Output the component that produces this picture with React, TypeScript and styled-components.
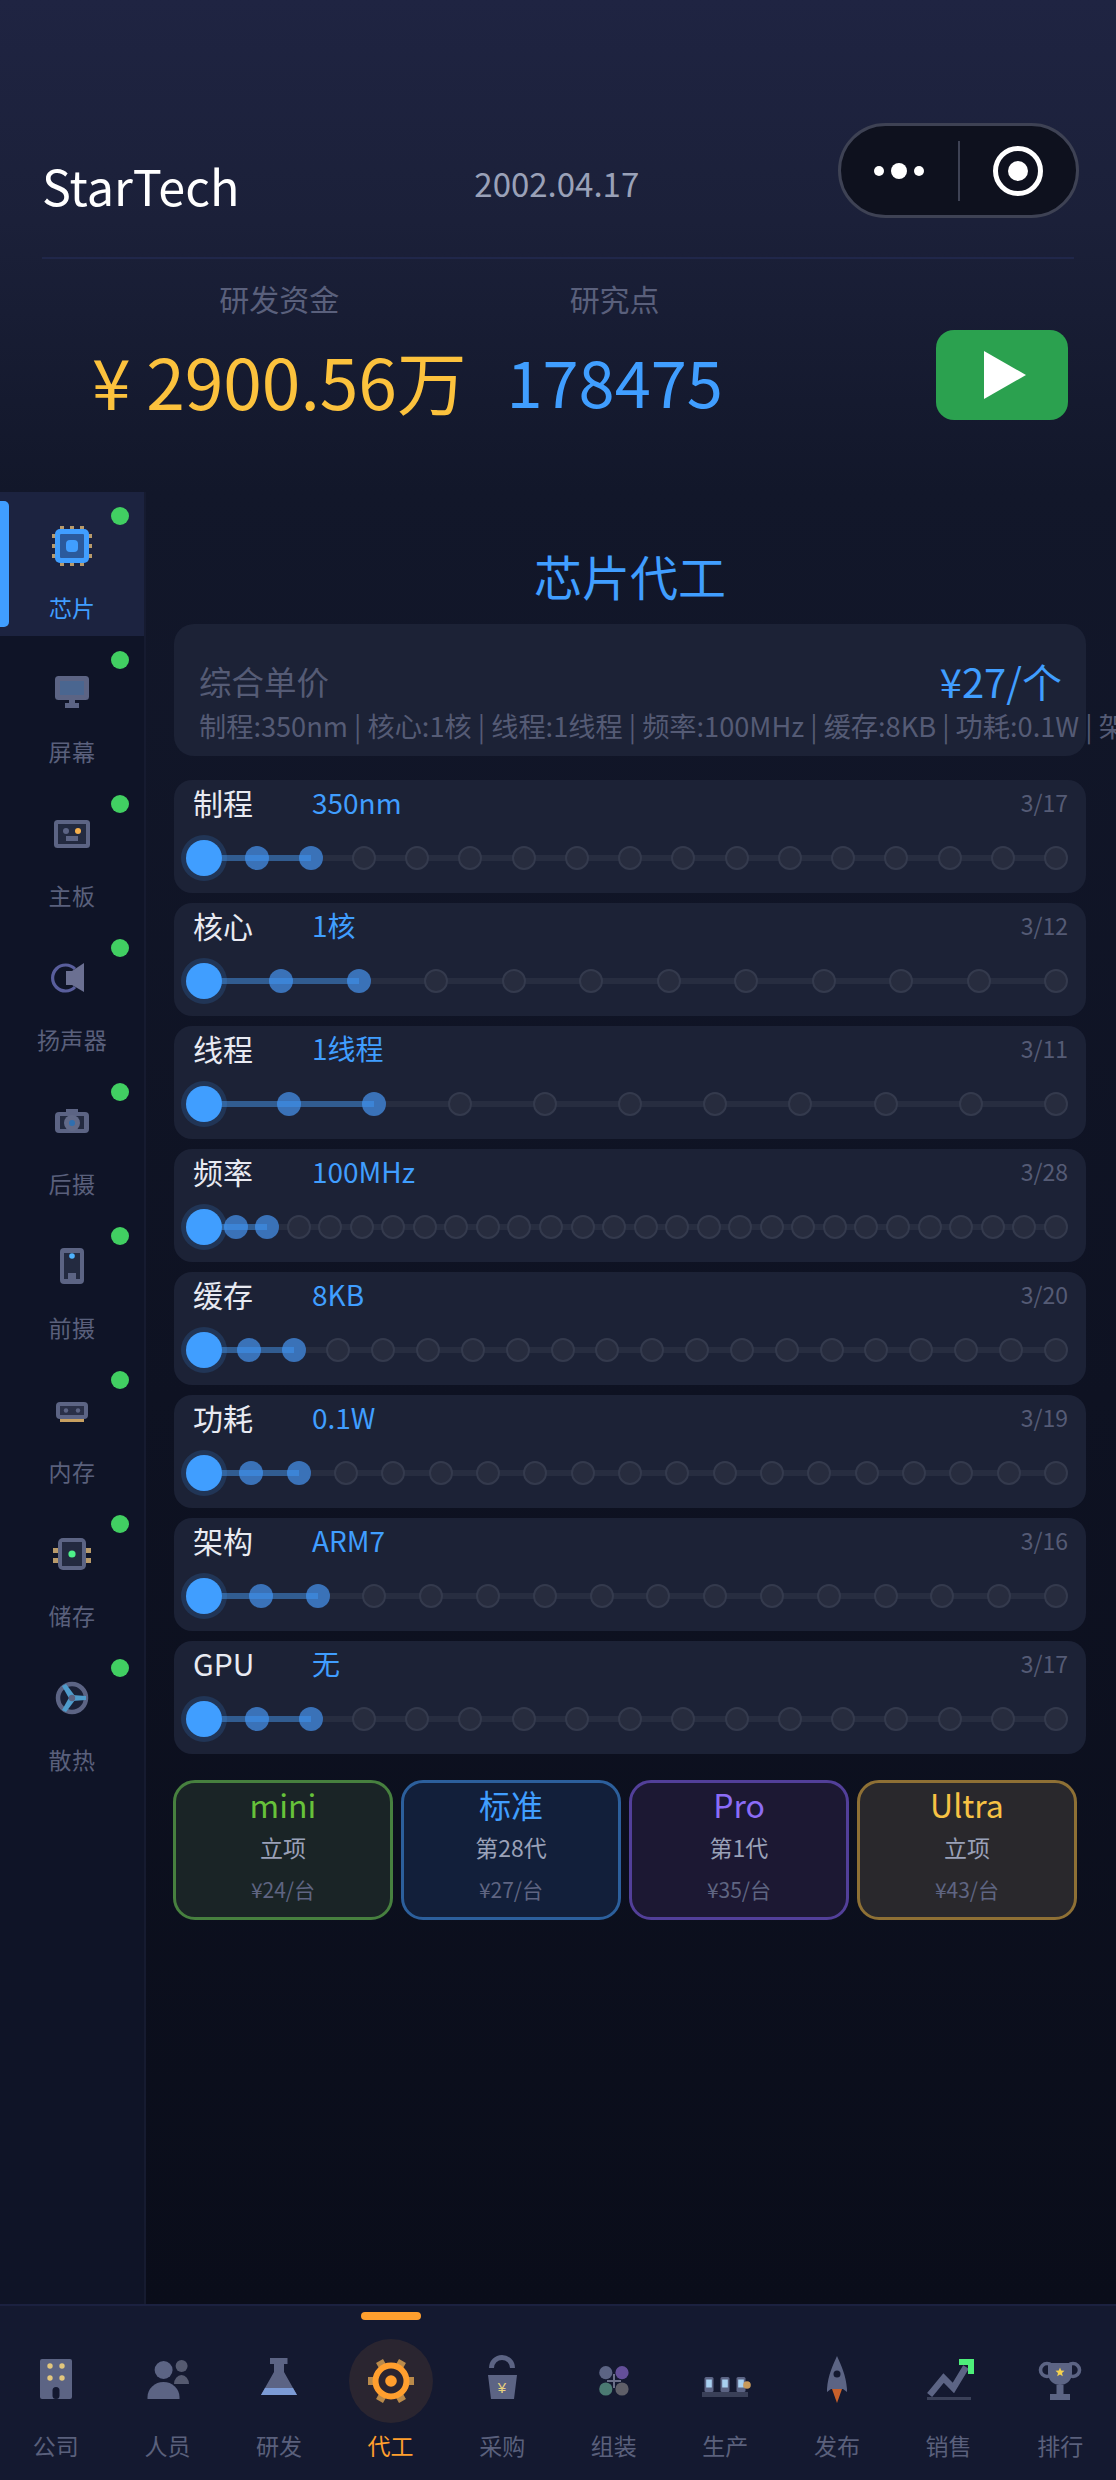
import React from "react";
import styled, { createGlobalStyle } from "styled-components";

const G = "#5c6484";
const D = "#232a40";
const T = "#b89a6a";

const Global = createGlobalStyle`
  html, body { margin: 0; padding: 0; background: #0b0e1b; }
  * { box-sizing: border-box; }
  #root { width: 1116px; height: 2480px; overflow: hidden; }
`;

const Page = styled.div`
  width: 1116px;
  height: 2480px;
  display: flex;
  flex-direction: column;
  overflow: hidden;
  font-family: "Noto Sans CJK SC", "Noto Sans", sans-serif;
  font-weight: 400;
`;

const Header = styled.header`
  height: 492px;
  flex: none;
  padding-top: 123px;
  background: linear-gradient(180deg, #1f2442 0%, #1b2039 45%, #12172a 100%);
`;
const TopRow = styled.div`
  display: flex;
  align-items: flex-start;
  padding: 0 37px 0 42px;
`;
const Brand = styled.div`
  margin-top: 30px;
  font-size: 48.5px;
  line-height: 64px;
  color: #fff;
`;
const DateText = styled.div`
  margin: 40px 0 0 235px;
  font-size: 33px;
  line-height: 40px;
  color: #9aa1b8;
`;
const Capsule = styled.div`
  margin-left: auto;
  width: 241px;
  height: 95px;
  border: 3px solid #3e4254;
  border-radius: 48px;
  background: #0e111e;
  display: flex;
  align-items: center;
`;
const CapsuleSide = styled.div`
  flex: 1;
  display: flex;
  justify-content: center;
`;
const CapsuleLine = styled.div`
  width: 2px;
  height: 60px;
  background: #3e4254;
`;
const HeaderRule = styled.div`
  height: 2px;
  margin: 39px 42px 0;
  background: #20274a;
`;
const Stats = styled.div`
  display: flex;
  align-items: flex-start;
  padding: 19px 48px 0 92px;
`;
const Stat = styled.div`
  display: flex;
  flex-direction: column;
  align-items: center;
  margin-right: 40px;
`;
const StatLabel = styled.div`
  font-size: 30px;
  line-height: 40px;
  color: #5a607c;
`;
const StatValue = styled.div<{ $color: string; $size: number }>`
  margin-top: 22px;
  font-size: ${(p) => p.$size}px;
  line-height: 80px;
  white-space: nowrap;
  color: ${(p) => p.$color};
`;
const PlayButton = styled.div`
  margin: 52px 0 0 auto;
  width: 132px;
  height: 90px;
  border-radius: 18px;
  background: #2ba14f;
  display: flex;
  align-items: center;
  justify-content: center;
  padding-left: 5px;
`;

const Body = styled.div`
  flex: 1;
  display: flex;
  min-height: 0;
`;
const Sidebar = styled.aside`
  width: 146px;
  flex: none;
  background: #0f1427;
  border-right: 2px solid #161b30;
`;
const SideItem = styled.div<{ $active?: boolean }>`
  position: relative;
  height: 144px;
  padding-top: 30px;
  display: flex;
  flex-direction: column;
  align-items: center;
  background: ${(p) => (p.$active ? "#1c2340" : "transparent")};
`;
const SideMark = styled.div`
  position: absolute;
  left: 0;
  top: 9px;
  width: 9px;
  height: 126px;
  border-radius: 0 5px 5px 0;
  background: #409eff;
`;
const SideDot = styled.div`
  position: absolute;
  left: 111px;
  top: 15px;
  width: 18px;
  height: 18px;
  border-radius: 50%;
  background: #41cf62;
`;
const SideLabel = styled.div<{ $active?: boolean }>`
  margin-top: 21px;
  font-size: 23px;
  line-height: 32px;
  letter-spacing: ${(p) => (p.$active ? "0" : "0.4px")};
  color: ${(p) => (p.$active ? "#409eff" : "#5a607c")};
`;
const IconBox = styled.svg`
  display: block;
  flex: none;
  width: 48px;
  height: 48px;
  overflow: visible;
`;

const Main = styled.main`
  flex: 1;
  min-width: 0;
  padding: 53px 30px 0 28px;
  background: linear-gradient(180deg, #12172a 0%, #0a0d1a 100%);
`;
const Title = styled.h1`
  margin: 0;
  text-align: center;
  font-size: 48px;
  font-weight: 400;
  line-height: 60px;
  color: #409eff;
`;
const Summary = styled.section`
  margin-top: 19px;
  height: 132px;
  padding: 35px 24px 0 25px;
  border-radius: 20px;
  background: #1c2236;
`;
const SummaryTop = styled.div`
  display: flex;
  justify-content: space-between;
  align-items: center;
  height: 44px;
`;
const SummaryName = styled.div`
  font-size: 32.5px;
  line-height: 44px;
  color: #555b75;
`;
const SummaryPrice = styled.div`
  font-size: 40px;
  line-height: 44px;
  color: #409eff;
`;
const SummaryDetail = styled.div`
  margin-top: 4px;
  font-size: 27.2px;
  line-height: 36px;
  white-space: nowrap;
  color: #555b75;
`;
const Rows = styled.div`
  margin-top: 24px;
  display: flex;
  flex-direction: column;
  gap: 10px;
`;
const Row = styled.section`
  height: 113px;
  padding: 5px 18px 0;
  border-radius: 18px;
  background: #1c2236;
`;
const RowHead = styled.div`
  display: flex;
  align-items: center;
  height: 34px;
`;
const RowName = styled.div`
  width: 120px;
  padding-left: 1px;
  font-size: 30px;
  line-height: 34px;
  color: #e8eaf2;
`;
const RowValue = styled.div`
  font-size: 28px;
  line-height: 34px;
  color: #409eff;
`;
const RowCount = styled.div`
  margin-left: auto;
  font-size: 23px;
  line-height: 34px;
  color: #555b75;
`;
const Track = styled.div`
  position: relative;
  margin-top: 15px;
  height: 48px;
  display: flex;
  align-items: center;
  justify-content: space-between;
`;
const TrackBase = styled.div`
  position: absolute;
  left: 12px;
  right: 12px;
  top: 21px;
  height: 6px;
  background: #272d40;
`;
const TrackFillArea = styled.div`
  position: absolute;
  left: 12px;
  right: 12px;
  top: 21px;
  height: 6px;
  z-index: 2;
`;
const TrackFill = styled.div`
  height: 100%;
  background: rgba(64, 158, 255, 0.42);
`;
const Stop = styled.div<{ $state: "current" | "done" | "todo" }>`
  position: relative;
  z-index: 1;
  flex: none;
  width: 24px;
  height: 24px;
  border-radius: 50%;
  ${(p) =>
    p.$state === "current"
      ? `
    width: 36px; height: 36px; margin: 0 -6px; background: #409eff;
    box-shadow: 0 0 0 5px rgba(64,158,255,.16); z-index: 3;`
      : p.$state === "done"
      ? `background: #3a72b8;`
      : `background: #272c3e; border: 2px solid #343a4d;`}
`;
const Tiers = styled.div`
  margin: 26px 0 0 -1px;
  display: flex;
  gap: 8px;
`;
const Tier = styled.div<{ $border: string; $bg: string }>`
  width: 220px;
  height: 140px;
  flex: none;
  border: 3px solid ${(p) => p.$border};
  border-radius: 22px;
  background: ${(p) => p.$bg};
  display: flex;
  flex-direction: column;
  align-items: center;
  padding-top: 1px;
`;
const TierName = styled.div<{ $color: string }>`
  font-size: 32px;
  line-height: 40px;
  color: ${(p) => p.$color};
`;
const TierStatus = styled.div`
  margin-top: 7px;
  font-size: 23px;
  line-height: 32px;
  color: #9aa1b8;
`;
const TierPrice = styled.div`
  margin-top: 12px;
  font-size: 21px;
  line-height: 28px;
  color: #5f6582;
`;

const Nav = styled.nav`
  height: 176px;
  flex: none;
  display: flex;
  border-top: 2px solid #1b2140;
  background: #141930;
`;
const NavItem = styled.div`
  position: relative;
  flex: 1;
  display: flex;
  flex-direction: column;
  align-items: center;
  padding-top: 51px;
`;
const NavGlow = styled.div`
  position: absolute;
  top: 33px;
  left: 50%;
  width: 84px;
  height: 84px;
  margin-left: -42px;
  border-radius: 50%;
  background: #2a2530;
`;
const NavBar = styled.div`
  position: absolute;
  top: 6px;
  left: 50%;
  width: 60px;
  height: 8px;
  margin-left: -30px;
  border-radius: 4px;
  background: #ff9f2e;
`;
const NavIcon = styled.div`
  position: relative;
  height: 48px;
`;
const NavLabel = styled.div<{ $active?: boolean }>`
  position: relative;
  margin-top: 24px;
  font-size: 23px;
  line-height: 32px;
  color: ${(p) => (p.$active ? "#ff9f2e" : "#5a607c")};
`;

const Svg = ({ children }: { children: React.ReactNode }) => (
  <IconBox viewBox="0 0 48 48">{children}</IconBox>
);

const pins = [12, 22, 32];
const sideIcons: Record<string, React.ReactNode> = {
  芯片: (
    <Svg>
      {pins.map((p) => (
        <g key={p} fill={T}>
          <rect x={p} y={4} width={4} height={4} />
          <rect x={p} y={40} width={4} height={4} />
          <rect x={4} y={p} width={4} height={4} />
          <rect x={40} y={p} width={4} height={4} />
        </g>
      ))}
      <rect x={7} y={7} width={34} height={34} rx={5} fill="#409eff" />
      <rect x={12} y={12} width={24} height={24} rx={1} fill="#2b5a9c" />
      <rect x={18} y={18} width={12} height={12} rx={4} fill="#409eff" />
    </Svg>
  ),
  屏幕: (
    <Svg>
      <rect x={7} y={10} width={34} height={24} rx={3.5} fill={G} />
      <rect x={12} y={15} width={24} height={14} fill="#4a6690" />
      <rect x={21} y={34} width={6} height={4} fill={G} />
      <rect x={17} y={37} width={14} height={5} fill={G} />
    </Svg>
  ),
  主板: (
    <Svg>
      <rect x={6} y={10} width={36} height={28} rx={3.5} fill={G} />
      <rect x={10} y={14} width={28} height={20} fill={D} />
      <circle cx={18} cy={21} r={3} fill={G} />
      <circle cx={30} cy={21} r={3} fill="#f5b04d" />
      <rect x={18} y={26} width={12} height={5} fill={G} />
    </Svg>
  ),
  扬声器: (
    <Svg>
      <path d="M27 15 A13 13 0 1 0 27 33" fill="none" stroke="#595e9c" strokeWidth={3.2} />
      <polygon points="18,17 24,17 36,9 36,38 24,31 18,31" fill="#6b7092" />
    </Svg>
  ),
  后摄: (
    <Svg>
      <rect x={18} y={11} width={12} height={5} fill={G} />
      <rect x={7} y={14} width={34} height={21} rx={4} fill={G} />
      <rect x={12} y={18} width={24} height={13} fill={D} />
      <circle cx={24} cy={25} r={8} fill="#626a88" />
      <circle cx={24} cy={25} r={3} fill="#2f6fb0" />
    </Svg>
  ),
  前摄: (
    <Svg>
      <rect x={12} y={6} width={24} height={36} rx={4} fill={G} />
      <rect x={16} y={11} width={16} height={26} fill={D} />
      <circle cx={24} cy={14} r={2.8} fill="#4fb3ff" />
      <rect x={20} y={31} width={8} height={6} fill={G} />
    </Svg>
  ),
  内存: (
    <Svg>
      <rect x={8} y={16} width={32} height={17} rx={4} fill={G} />
      <rect x={12} y={20} width={24} height={9} fill="#2a3048" />
      <circle cx={18} cy={24.5} r={2.2} fill={G} />
      <circle cx={30} cy={24.5} r={2.2} fill={G} />
      <rect x={12} y={33} width={24} height={3} fill="#c8a060" />
    </Svg>
  ),
  储存: (
    <Svg>
      <rect x={5} y={18} width={6} height={5} fill={T} />
      <rect x={5} y={28} width={6} height={5} fill={T} />
      <rect x={37} y={18} width={6} height={5} fill={T} />
      <rect x={37} y={28} width={6} height={5} fill={T} />
      <rect x={10} y={8} width={28} height={32} rx={5} fill={G} />
      <rect x={14} y={12} width={20} height={24} fill={D} />
      <circle cx={24} cy={24} r={3.6} fill="#4ef08a" />
    </Svg>
  ),
  散热: (
    <Svg>
      <circle cx={24} cy={24} r={14} fill="#1a2036" stroke={G} strokeWidth={4.5} />
      <g fill="#4f9ccc">
        <polygon points="24,21 38,22 38,26 24,27" />
        <polygon points="22,26 14,12 18,10 27,22" />
        <polygon points="22,22 14,36 18,38 27,26" />
      </g>
      <circle cx={24} cy={24} r={3.2} fill={G} />
    </Svg>
  ),
};

const navIcons: Record<string, React.ReactNode> = {
  公司: (
    <Svg>
      <rect x={8} y={2} width={32} height={40} rx={2} fill={G} />
      <g fill="#e3c77d">
        <circle cx={18} cy={9} r={2.7} />
        <circle cx={30} cy={9} r={2.7} />
        <circle cx={18} cy={21} r={2.7} />
        <circle cx={30} cy={21} r={2.7} />
      </g>
      <rect x={20.5} y={30} width={7} height={12} rx={3.5} fill="#141930" />
    </Svg>
  ),
  人员: (
    <Svg>
      <circle cx={38.6} cy={9} r={6} fill="#555a70" />
      <path d="M31 27 A7.5 9 0 0 1 46 27 Z" fill="#555a70" />
      <circle cx={20.6} cy={13} r={9} fill={G} />
      <path d="M4.5 42 V40 A16 15 0 0 1 36.5 40 V42 Z" fill={G} />
    </Svg>
  ),
  研发: (
    <Svg>
      <rect x={15} y={1} width={17.5} height={6} fill={G} />
      <polygon points="19,7 29,7 29,15 42,38 6,38 19,15" fill={G} />
      <polygon points="10,31 38,31 42,38 6,38" fill="#7c9bd6" />
    </Svg>
  ),
  代工: (
    <Svg>
      {[0, 60, 120, 180, 240, 300].map((a) => (
        <rect key={a} x={20} y={1} width={8} height={8} fill="#b98a4a" transform={`rotate(${a + 30} 24 24)`} />
      ))}
      <circle cx={24} cy={24} r={15.5} fill="#2a2530" stroke="#ff9f2e" strokeWidth={6} />
      <circle cx={24} cy={24} r={5.8} fill="#ff9f2e" />
    </Svg>
  ),
  采购: (
    <Svg>
      <path d="M13.5 11 A10.5 10.5 0 0 1 34.5 11" fill="none" stroke={G} strokeWidth={5} />
      <polygon points="10,18 39,18 36,42 13,42" fill={G} />
      <text x={24} y={36} textAnchor="middle" fontSize={15} fill="#e9d27d" fontFamily="Liberation Sans, sans-serif">
        ¥
      </text>
    </Svg>
  ),
  组装: (
    <Svg>
      <circle cx={15.8} cy={15.7} r={6.6} fill={G} />
      <circle cx={32} cy={15.7} r={6.6} fill="#644f99" />
      <circle cx={15.8} cy={32} r={6.6} fill="#4b7a72" />
      <circle cx={32} cy={32} r={6.6} fill="#5f5f68" />
      <rect x={17} y={23} width={14} height={2} fill="#6a6f88" />
      <rect x={23} y={17} width={2} height={14} fill="#6a6f88" />
    </Svg>
  ),
  生产: (
    <Svg>
      <rect x={1} y={35} width={46} height={5} fill="#3a4058" />
      {[3.5, 19.5, 35.5].map((x) => (
        <g key={x}>
          <rect x={x} y={20} width={9} height={15} rx={1.5} fill={G} />
          <rect x={x + 1.7} y={22.5} width={5.6} height={8} fill="#a8d0f0" />
        </g>
      ))}
      <circle cx={46} cy={28} r={3.8} fill="#c89a5a" />
    </Svg>
  ),
  发布: (
    <Svg>
      <polygon points="19,32 29,32 24,46" fill="#c8602a" />
      <path d="M24 -1 C28 8 33 18 34 32 V35 L30 32 H18 L14 35 V32 C15 18 20 8 24 -1 Z" fill={G} />
      <circle cx={24} cy={17} r={3.5} fill="#141930" />
    </Svg>
  ),
  销售: (
    <Svg>
      <rect x={2} y={40} width={44} height={3} fill="#3a4058" />
      <polyline points="4.6,38 18.6,21 28.4,31 41,10" fill="none" stroke={G} strokeWidth={6.5} />
      <polygon points="34,2 49,2 49,17 43,17 43,8 34,8" fill="#4ef07a" />
    </Svg>
  ),
  排行: (
    <Svg>
      <circle cx={11} cy={13} r={6.5} fill="none" stroke={G} strokeWidth={3.6} />
      <circle cx={37} cy={13} r={6.5} fill="none" stroke={G} strokeWidth={3.6} />
      <path d="M12 6 H36 V16 C36 24 30 28 24 28 C18 28 12 24 12 16 Z" fill={G} />
      <rect x={20.5} y={28} width={7} height={10} fill={G} />
      <rect x={14} y={37} width={20} height={6} fill={G} />
      <polygon
        points="24,10.5 25.2,13.6 28.5,13.8 26,15.9 26.8,19.2 24,17.4 21.2,19.2 22,15.9 19.5,13.8 22.8,13.6"
        fill="#f7d34f"
      />
    </Svg>
  ),
};

const specs = [
  ["制程", "350nm", 17],
  ["核心", "1核", 12],
  ["线程", "1线程", 11],
  ["频率", "100MHz", 28],
  ["缓存", "8KB", 20],
  ["功耗", "0.1W", 19],
  ["架构", "ARM7", 16],
  ["GPU", "无", 17],
] as const;

const tiers = [
  { name: "mini", status: "立项", price: "¥24/台", color: "#67c23a", border: "#47803f", bg: "#1a2426" },
  { name: "标准", status: "第28代", price: "¥27/台", color: "#409eff", border: "#2c5f9c", bg: "#121f3a" },
  { name: "Pro", status: "第1代", price: "¥35/台", color: "#8b6cf6", border: "#523f99", bg: "#1c1833" },
  { name: "Ultra", status: "立项", price: "¥43/台", color: "#f7c244", border: "#8e7035", bg: "#29282c" },
];

export default function App() {
  return (
    <Page>
      <Global />
      <Header>
        <TopRow>
          <Brand>StarTech</Brand>
          <DateText>2002.04.17</DateText>
          <Capsule>
            <CapsuleSide>
              <svg width="56" height="20" viewBox="0 0 56 20">
                <circle cx="8" cy="10" r="5" fill="#fff" />
                <circle cx="28" cy="10" r="8" fill="#fff" />
                <circle cx="48" cy="10" r="5" fill="#fff" />
              </svg>
            </CapsuleSide>
            <CapsuleLine />
            <CapsuleSide>
              <svg width="52" height="52" viewBox="0 0 52 52">
                <circle cx="26" cy="26" r="22.5" fill="none" stroke="#fff" strokeWidth="5" />
                <circle cx="26" cy="26" r="10" fill="#fff" />
              </svg>
            </CapsuleSide>
          </Capsule>
        </TopRow>
        <HeaderRule />
        <Stats>
          <Stat>
            <StatLabel>研发资金</StatLabel>
            <StatValue $color="#fcc23d" $size={69.5}>¥ 2900.56万</StatValue>
          </Stat>
          <Stat>
            <StatLabel>研究点</StatLabel>
            <StatValue $color="#409eff" $size={65}>178475</StatValue>
          </Stat>
          <PlayButton>
            <svg width="42" height="48" viewBox="0 0 42 48">
              <polygon points="0,0 42,24 0,48" fill="#fff" />
            </svg>
          </PlayButton>
        </Stats>
      </Header>
      <Body>
        <Sidebar>
          {Object.keys(sideIcons).map((name, i) => (
            <SideItem key={name} $active={i === 0}>
              {i === 0 && <SideMark />}
              <SideDot />
              {sideIcons[name]}
              <SideLabel $active={i === 0}>{name}</SideLabel>
            </SideItem>
          ))}
        </Sidebar>
        <Main>
          <Title>芯片代工</Title>
          <Summary>
            <SummaryTop>
              <SummaryName>综合单价</SummaryName>
              <SummaryPrice>¥27/个</SummaryPrice>
            </SummaryTop>
            <SummaryDetail>制程:350nm | 核心:1核 | 线程:1线程 | 频率:100MHz | 缓存:8KB | 功耗:0.1W | 架构:ARM7 | GPU:无</SummaryDetail>
          </Summary>
          <Rows>
            {specs.map(([name, value, total]) => (
              <Row key={name}>
                <RowHead>
                  <RowName>{name}</RowName>
                  <RowValue>{value}</RowValue>
                  <RowCount>3/{total}</RowCount>
                </RowHead>
                <Track>
                  <TrackBase />
                  {Array.from({ length: total }, (_, i) => (
                    <Stop key={i} $state={i === 0 ? "current" : i < 3 ? "done" : "todo"} />
                  ))}
                  <TrackFillArea>
                    <TrackFill style={{ width: `${(2 / (total - 1)) * 100}%` }} />
                  </TrackFillArea>
                </Track>
              </Row>
            ))}
          </Rows>
          <Tiers>
            {tiers.map((t) => (
              <Tier key={t.name} $border={t.border} $bg={t.bg}>
                <TierName $color={t.color}>{t.name}</TierName>
                <TierStatus>{t.status}</TierStatus>
                <TierPrice>{t.price}</TierPrice>
              </Tier>
            ))}
          </Tiers>
        </Main>
      </Body>
      <Nav>
        {Object.keys(navIcons).map((name) => {
          const active = name === "代工";
          return (
            <NavItem key={name}>
              {active && <NavBar />}
              {active && <NavGlow />}
              <NavIcon>{navIcons[name]}</NavIcon>
              <NavLabel $active={active}>{name}</NavLabel>
            </NavItem>
          );
        })}
      </Nav>
    </Page>
  );
}
